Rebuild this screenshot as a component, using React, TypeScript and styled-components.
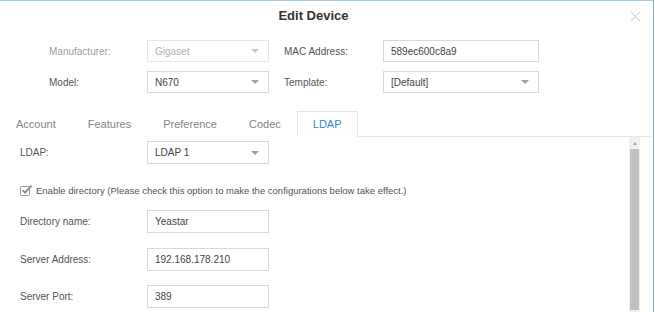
import React from 'react';
import styled, { createGlobalStyle } from 'styled-components';

const GlobalStyle = createGlobalStyle`
  html, body {
    margin: 0;
    padding: 0;
    background: #ffffff;
  }
  body {
    font-family: "Liberation Sans", Arial, sans-serif;
    color: #555;
  }
  * { box-sizing: border-box; }
`;

const Modal = styled.div`
  width: 654px;
  height: 312px;
  border-top: 1px solid #a6c8e8;
  border-right: 1px solid #7aaedc;
  background: #fff;
  overflow: hidden;
  display: flex;
  flex-direction: column;
`;

const Header = styled.div`
  height: 29px;
  display: flex;
  align-items: center;
  position: relative;
`;

const Title = styled.h3`
  flex: 1;
  margin: 0;
  padding-right: 26px;
  text-align: center;
  font-size: 13px;
  font-weight: bold;
  color: #333;
`;

const CloseButton = styled.button`
  position: absolute;
  right: 12px;
  top: 10px;
  width: 11px;
  height: 11px;
  padding: 0;
  border: none;
  background: none;
  display: flex;
  cursor: pointer;
`;

const TopForm = styled.div`
  display: grid;
  grid-template-columns: 98px 122px 114px 156px;
  grid-auto-rows: 22px;
  row-gap: 9px;
  padding: 10px 0 0 49px;
`;

const Label = styled.label<{ $disabled?: boolean; $indent?: number }>`
  display: flex;
  align-items: center;
  font-size: 10px;
  padding-left: ${({ $indent }) => $indent ?? 0}px;
  color: ${({ $disabled }) => ($disabled ? '#a0a0a0' : '#555')};
`;

const Field = styled.div<{ $disabled?: boolean; $height?: number; $width?: number }>`
  height: ${({ $height }) => $height ?? 22}px;
  width: ${({ $width }) => ($width ? `${$width}px` : 'auto')};
  border: 1px solid ${({ $disabled }) => ($disabled ? '#e6e6e6' : '#d9d9d9')};
  background: #fff;
  display: flex;
  align-items: center;
  justify-content: space-between;
  padding: 0 9px 0 7px;
  font-size: 10px;
  color: ${({ $disabled }) => ($disabled ? '#b0b0b0' : '#444')};
`;

const Caret = styled.span<{ $disabled?: boolean }>`
  width: 0;
  height: 0;
  border-left: 4px solid transparent;
  border-right: 4px solid transparent;
  border-top: 4px solid ${({ $disabled }) => ($disabled ? '#c8c8c8' : '#a0a0a0')};
`;

const Tabs = styled.div`
  display: flex;
  margin-top: 18px;
  height: 26px;
  border-bottom: 1px solid #e6e6e6;
  margin-right: 2px;
`;

const Tab = styled.div<{ $active?: boolean }>`
  height: 26px;
  padding: 0 15px;
  border: 1px solid ${({ $active }) => ($active ? '#e6e6e6' : 'transparent')};
  border-bottom: 1px solid ${({ $active }) => ($active ? '#fff' : 'transparent')};
  margin-bottom: -1px;
  background: #fff;
  display: flex;
  align-items: center;
  font-size: 11px;
  color: ${({ $active }) => ($active ? '#2f86d6' : '#858585')};
`;

const BodyRow = styled.div`
  flex: 1;
  display: flex;
  min-height: 0;
`;

const Content = styled.div`
  flex: 1;
  overflow: hidden;
  padding: 4px 0 0 20px;
  display: flex;
  flex-direction: column;
`;

const FormRow = styled.div<{ $gap?: number }>`
  display: flex;
  align-items: center;
  height: 23px;
  margin-top: ${({ $gap }) => $gap ?? 0}px;
`;

const RowLabel = styled.label`
  width: 127px;
  font-size: 10px;
  color: #555;
`;

const CheckRow = styled.div`
  display: flex;
  align-items: center;
  gap: 2px;
  height: 14px;
  margin-top: 19px;
  font-size: 9.5px;
  color: #555;
`;

const Scrollbar = styled.div`
  width: 11px;
  background: #f1f1f1;
  display: flex;
  flex-direction: column;
  align-items: center;
  margin-right: 13px;
`;

const ScrollArrow = styled.span`
  margin-top: 5px;
  width: 0;
  height: 0;
  border-left: 2.5px solid transparent;
  border-right: 2.5px solid transparent;
  border-bottom: 3px solid #a3a3a3;
`;

const ScrollThumb = styled.div`
  width: 9px;
  flex: 1;
  margin-top: 4px;
  margin-bottom: 2px;
  background: #c1c1c1;
`;

const CloseIcon = () => (
  <svg width="11" height="11" viewBox="0 0 11 11">
    <path d="M1 1L10 10M10 1L1 10" stroke="#c4c4c4" strokeWidth="1" />
  </svg>
);

const CheckIcon = () => (
  <svg width="14" height="12" viewBox="0 0 14 12">
    <rect x="0.5" y="2.5" width="9" height="9" rx="1" fill="#fff" stroke="#999" />
    <path d="M2.5 6.2L5 8.6L11.5 1.6" fill="none" stroke="#888" strokeWidth="1.8" />
  </svg>
);

const Select: React.FC<{ value: string; disabled?: boolean; height?: number; width?: number }> = ({
  value,
  disabled,
  height,
  width,
}) => (
  <Field $disabled={disabled} $height={height} $width={width}>
    <span>{value}</span>
    <Caret $disabled={disabled} />
  </Field>
);

const tabs = ['Account', 'Features', 'Preference', 'Codec', 'LDAP'];

export default function App() {
  return (
    <>
      <GlobalStyle />
      <Modal>
        <Header>
          <Title>Edit Device</Title>
          <CloseButton aria-label="Close">
            <CloseIcon />
          </CloseButton>
        </Header>

        <TopForm>
          <Label $disabled>Manufacturer:</Label>
          <Select value="Gigaset" disabled />
          <Label $indent={15}>MAC Address:</Label>
          <Field>589ec600c8a9</Field>

          <Label>Model:</Label>
          <Select value="N670" />
          <Label $indent={15}>Template:</Label>
          <Select value="[Default]" />
        </TopForm>

        <Tabs>
          {tabs.map((t) => (
            <Tab key={t} $active={t === 'LDAP'}>
              {t}
            </Tab>
          ))}
        </Tabs>

        <BodyRow>
          <Content>
            <FormRow>
              <RowLabel>LDAP:</RowLabel>
              <Select value="LDAP 1" height={23} width={122} />
            </FormRow>

            <CheckRow>
              <CheckIcon />
              Enable directory (Please check this option to make the configurations below take effect.)
            </CheckRow>

            <FormRow $gap={13}>
              <RowLabel>Directory name:</RowLabel>
              <Field $height={23} $width={122}>Yeastar</Field>
            </FormRow>
            <FormRow $gap={15}>
              <RowLabel>Server Address:</RowLabel>
              <Field $height={23} $width={122}>192.168.178.210</Field>
            </FormRow>
            <FormRow $gap={14}>
              <RowLabel>Server Port:</RowLabel>
              <Field $height={23} $width={122}>389</Field>
            </FormRow>
          </Content>
          <Scrollbar>
            <ScrollArrow />
            <ScrollThumb />
          </Scrollbar>
        </BodyRow>
      </Modal>
    </>
  );
}
